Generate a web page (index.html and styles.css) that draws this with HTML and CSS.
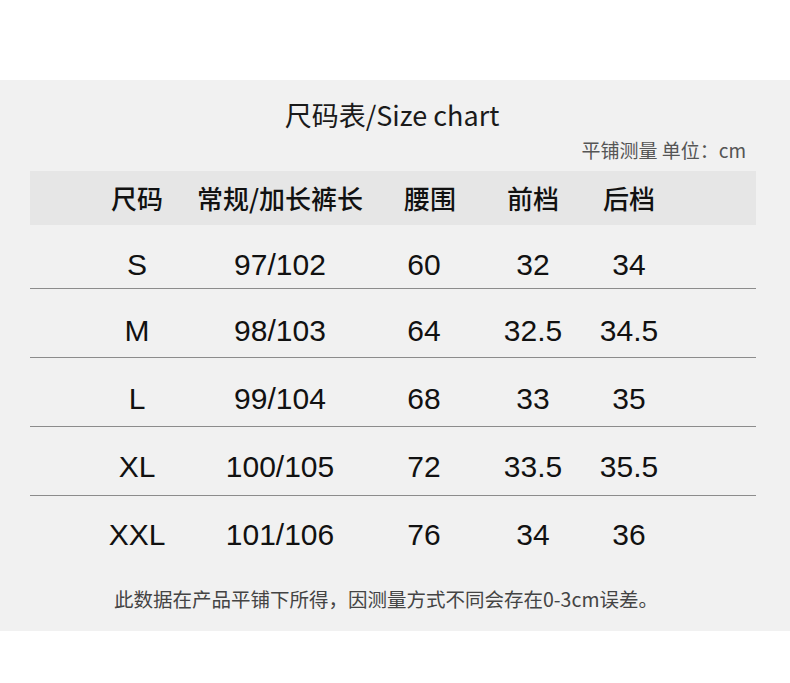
FILE: index.html
```html
<!DOCTYPE html>
<html lang="zh-CN">
<head>
<meta charset="utf-8">
<title>尺码表/Size chart</title>
<link rel="stylesheet" href="styles.css">
</head>
<body>
<div class="page">
  <section class="panel">
    <h1 class="title">尺码表/Size chart</h1>
    <div class="unit">平铺测量 单位：cm</div>
    <div class="table">
      <div class="row head">
        <span class="cell">尺码</span>
        <span class="cell">常规/加长裤长</span>
        <span class="cell">腰围</span>
        <span class="cell">前档</span>
        <span class="cell">后档</span>
      </div>
      <div class="row data r1">
        <span class="cell">S</span>
        <span class="cell">97/102</span>
        <span class="cell c3">60</span>
        <span class="cell">32</span>
        <span class="cell">34</span>
      </div>
      <div class="row data r2">
        <span class="cell">M</span>
        <span class="cell">98/103</span>
        <span class="cell c3">64</span>
        <span class="cell">32.5</span>
        <span class="cell">34.5</span>
      </div>
      <div class="row data r3">
        <span class="cell">L</span>
        <span class="cell">99/104</span>
        <span class="cell c3">68</span>
        <span class="cell">33</span>
        <span class="cell">35</span>
      </div>
      <div class="row data r4">
        <span class="cell">XL</span>
        <span class="cell">100/105</span>
        <span class="cell c3">72</span>
        <span class="cell">33.5</span>
        <span class="cell">35.5</span>
      </div>
      <div class="row data r5">
        <span class="cell">XXL</span>
        <span class="cell">101/106</span>
        <span class="cell c3">76</span>
        <span class="cell">34</span>
        <span class="cell">36</span>
      </div>
    </div>
    <p class="note">此数据在产品平铺下所得，因测量方式不同会存在0-3cm误差。</p>
  </section>
</div>
</body>
</html>
```

FILE: styles.css
```css
html, body {
  margin: 0;
  padding: 0;
  background: #ffffff;
}

.page {
  width: 790px;
  height: 683px;
  padding-top: 80px;
  box-sizing: border-box;
  font-family: "Noto Sans CJK SC", "Noto Sans", sans-serif;
}

.panel {
  background: #f1f1f1;
  height: 551px;
  padding: 0 34px 0 30px;
  display: flex;
  flex-direction: column;
}

.title {
  margin: 0;
  height: 60px;
  padding-top: 8px;
  box-sizing: border-box;
  display: flex;
  align-items: center;
  justify-content: center;
  font-size: 27px;
  font-weight: 400;
  color: #1a1a1a;
  transform: translateX(-1px);
}

.unit {
  height: 31px;
  display: flex;
  align-items: flex-start;
  justify-content: flex-end;
  padding-right: 10px;
  font-size: 19px;
  color: #555555;
  line-height: 1;
}

.table {
  display: flex;
  flex-direction: column;
}

.row {
  display: grid;
  grid-template-columns: 118px 168px 126px 86px 106px;
  padding-left: 48px;
  align-items: center;
}

.cell {
  display: flex;
  justify-content: center;
  white-space: nowrap;
  min-width: 0;
}

.head {
  background: #e6e6e6;
  height: 54px;
  font-size: 26px;
  font-weight: 500;
  color: #111111;
  line-height: 1;
}

.head .cell:nth-child(3) {
  transform: translateX(3px);
}

.data {
  height: 68px;
  box-sizing: content-box;
  border-bottom: 1px solid #8c8c8c;
  font-family: "Liberation Sans", Arial, sans-serif;
  font-size: 30px;
  color: #111111;
  line-height: 1;
}

.data .cell {
  padding-top: 14px;
}

.data.r1 {
  height: 63px;
}

.data.r1 .cell {
  padding-top: 16px;
}

.data.r2 .cell {
  padding-top: 16px;
}

.data.r3 .cell {
  padding-top: 13px;
}

.data.r4 .cell {
  padding-top: 11px;
}

.data.r5 .cell {
  padding-top: 9px;
}

.data.r5 {
  border-bottom: none;
}

.data .c3 {
  transform: translateX(-3px);
}

.note {
  margin: 0;
  padding-top: 23px;
  padding-right: 14px;
  text-align: center;
  font-size: 19.5px;
  color: #444444;
  line-height: 1.2;
}
```
